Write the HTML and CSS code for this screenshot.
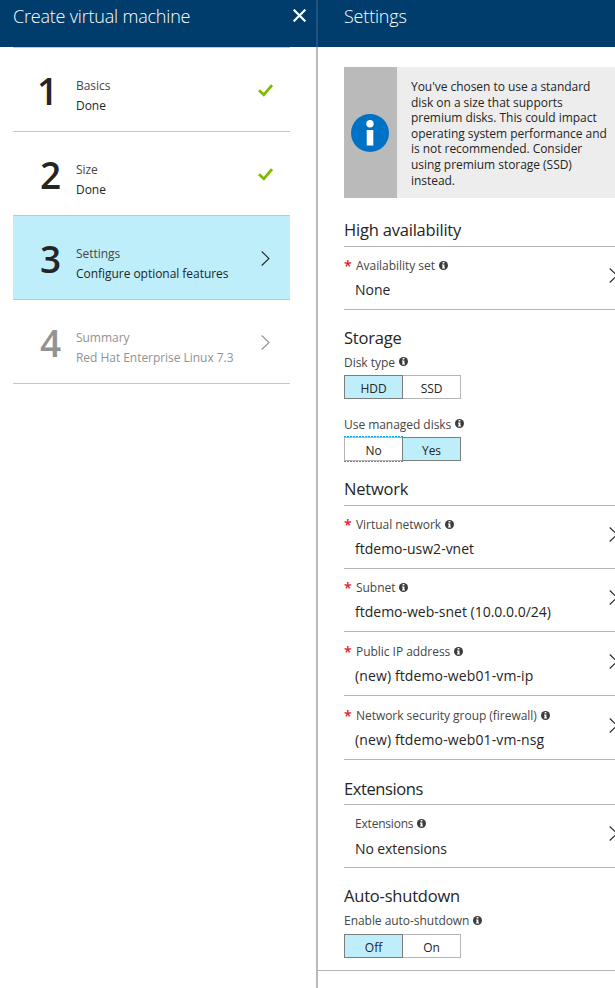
FILE: index.html
```
<!DOCTYPE html>
<html lang="en">
<head>
<meta charset="utf-8">
<title>Create virtual machine</title>
<link rel="stylesheet" href="styles.css">
</head>
<body>
<svg width="0" height="0" class="defs" aria-hidden="true">
  <symbol id="info" viewBox="0 0 9 9"><circle cx="4.5" cy="4.5" r="4.5" fill="#3c3c3c"/><path d="M3.6 1.1h1.8v1.5H3.6zM3 3.4h2.4v3H6v1H3v-1h.6v-2H3z" fill="#fff"/></symbol>
  <symbol id="chevron" viewBox="0 0 9 15"><path d="M.7.5 8 7.5.7 14.5" fill="none" stroke="currentColor" stroke-width="1.05"/></symbol>
  <symbol id="check" viewBox="0 0 15 13"><path d="M1 6.3 5.8 10.8 14 1.2" fill="none" stroke="#7fba00" stroke-width="2.8"/></symbol>
</svg>
<main class="blades">
  <section class="blade wizard">
    <header class="head"><h1 class="t-create">Create virtual machine</h1>
      <svg class="close" viewBox="0 0 12 12"><path d="M.6.6 11.4 11.4M11.4.6.6 11.4" stroke="#fff" stroke-width="2"/></svg>
    </header>
    <ol class="steps">
      <li class="step"><span class="num one">1</span><div class="info"><p class="name">Basics</p><p class="desc">Done</p></div><svg class="check"><use href="#check"/></svg></li>
      <li class="step"><span class="num">2</span><div class="info"><p class="name">Size</p><p class="desc">Done</p></div><svg class="check"><use href="#check"/></svg></li>
      <li class="step active"><span class="num">3</span><div class="info"><p class="name">Settings</p><p class="desc">Configure optional features</p></div><svg class="chev"><use href="#chevron"/></svg></li>
      <li class="step disabled"><span class="num">4</span><div class="info"><p class="name">Summary</p><p class="desc">Red Hat Enterprise Linux 7.3</p></div><svg class="chev"><use href="#chevron"/></svg></li>
    </ol>
  </section>
  <section class="blade settings">
    <header class="head"><h1>Settings</h1></header>
    <div class="content">
      <div class="notice">
        <div class="notice-icon"><svg viewBox="0 0 38 38"><circle cx="19" cy="19" r="19" fill="#0072c6"/><circle cx="19" cy="9.7" r="3.7" fill="#fff"/><path d="M15.7 16h6.6v15.5h-6.6z" fill="#fff"/></svg></div>
        <p>You've chosen to use a standard<br>disk on a size that supports<br>premium disks. This could impact<br>operating system performance and<br>is not recommended. Consider<br>using premium storage (SSD)<br>instead.</p>
      </div>
      <h2 class="h-avail">High availability</h2>
      <div class="field"><div><p class="label"><b>*</b><span>Availability set</span><svg><use href="#info"/></svg></p><p class="value">None</p></div><svg class="chev"><use href="#chevron"/></svg></div>
      <h2 class="h-storage">Storage</h2>
      <p class="label plain"><span>Disk type</span><svg><use href="#info"/></svg></p>
      <div class="toggle"><span class="on">HDD</span><span>SSD</span></div>
      <p class="label plain second"><span>Use managed disks</span><svg><use href="#info"/></svg></p>
      <div class="toggle"><span class="focus">No</span><span class="on">Yes</span></div>
      <h2 class="h-network">Network</h2>
      <div class="field"><div><p class="label"><b>*</b><span>Virtual network</span><svg><use href="#info"/></svg></p><p class="value">ftdemo-usw2-vnet</p></div><svg class="chev"><use href="#chevron"/></svg></div>
      <div class="field"><div><p class="label"><b>*</b><span>Subnet</span><svg><use href="#info"/></svg></p><p class="value">ftdemo-web-snet (10.0.0.0/24)</p></div><svg class="chev"><use href="#chevron"/></svg></div>
      <div class="field tall"><div><p class="label"><b>*</b><span>Public IP address</span><svg><use href="#info"/></svg></p><p class="value wide">(new) ftdemo-web01-vm-ip</p></div><svg class="chev"><use href="#chevron"/></svg></div>
      <div class="field tall"><div><p class="label"><b>*</b><span>Network security group (firewall)</span><svg><use href="#info"/></svg></p><p class="value wide">(new) ftdemo-web01-vm-nsg</p></div><svg class="chev"><use href="#chevron"/></svg></div>
      <h2 class="h-ext">Extensions</h2>
      <div class="field optional"><div><p class="label"><span>Extensions</span><svg><use href="#info"/></svg></p><p class="value">No extensions</p></div><svg class="chev"><use href="#chevron"/></svg></div>
      <h2 class="h-auto">Auto-shutdown</h2>
      <p class="label plain last"><span>Enable auto-shutdown</span><svg><use href="#info"/></svg></p>
      <div class="toggle"><span class="on">Off</span><span>On</span></div>
    </div>
    <footer></footer>
  </section>
</main>
</body>
</html>
```
FILE: styles.css
```
* { box-sizing: border-box; margin: 0; padding: 0; }
html, body { height: 100%; overflow: hidden; }
body { background: #fff; color: #252525; font: 12px/16px "Open Sans", "Noto Sans", sans-serif; letter-spacing: -0.04px; white-space: nowrap; }
svg { display: block; flex: none; }
.defs { position: absolute; }
.blades { display: flex; height: 988px; }
.wizard { width: 316px; }
.settings { flex: 1; min-width: 0; border-left: 2px solid #bababa; }
.head { display: flex; justify-content: space-between; height: 47px; padding: 4px 10px 0 13px; background: #003c6c; color: #fff; }
.settings .head { margin-left: -2px; padding-left: 26px; border-left: 2px solid #1f5480; }
h1 { font-size: 18px; line-height: 24px; font-weight: 300; letter-spacing: -0.2px; }
.close { width: 13px; height: 13px; margin-top: 5px; }

.steps { list-style: none; margin: 0 26px 0 13px; border-top: 1px solid #c6c6c6; }
.step { display: flex; height: 84px; padding: 0 20px 0 27px; border-bottom: 1px solid #c6c6c6; }
.step.active { background: #bdeefa; }
.num { width: 36px; padding-top: 19px; font-size: 37px; line-height: 48px; font-weight: 600; letter-spacing: 0; }
.num.one { margin-left: -3px; width: 39px; }
.info { flex: 1; padding-top: 28px; line-height: 20px; }
.name { color: #464646; }
.step .chev { margin-top: 35px; }
.check { width: 15px; height: 13px; margin: 36px -3px 0 0; }
.chev { width: 9px; height: 15px; }
.disabled, .disabled .name { color: #929292; }

.content { padding-left: 26px; height: 903px; }
.notice { display: flex; height: 131px; margin-top: 20px; background: #ededed; }
.notice-icon { display: flex; align-items: center; justify-content: center; width: 53px; padding-right: 1px; background: #bababa; }
.notice-icon svg { width: 38px; height: 38px; }
.notice p { padding: 12px 0 0 14px; line-height: 15.6px; }
h2 { font-size: 16.5px; line-height: 24px; font-weight: 400; letter-spacing: -0.2px; }
.h-avail { height: 49px; padding-top: 20px; border-bottom: 1px solid #b5b5b5; }
.h-storage { height: 43px; padding-top: 16px; }
.h-network { height: 45px; padding-top: 16px; border-bottom: 1px solid #b5b5b5; }
.h-ext { height: 45px; padding-top: 17px; border-bottom: 1px solid #b5b5b5; letter-spacing: -0.4px; }
.h-auto { height: 43px; padding-top: 16px; }
.field { display: flex; justify-content: space-between; height: 63px; padding-top: 10px; border-bottom: 1px solid #b5b5b5; }
.field.tall { height: 64px; padding-top: 11px; }
.field .chev { margin: 11px -3px 0 0; }
.label { display: flex; align-items: center; height: 16px; color: #464646; }
.label span { padding-top: 2px; }
.label b { width: 12px; padding-top: 1px; color: #e81123; font-size: 14px; font-weight: 600; }
.label svg { width: 9px; height: 9px; margin-left: 4px; }
.value { padding-left: 11px; margin-top: 7px; font-size: 14px; line-height: 20px; letter-spacing: 0; }
.value.wide { letter-spacing: 0.12px; }
.optional .label { padding-left: 11px; letter-spacing: -0.2px; }
.optional .value { margin-top: 8px; letter-spacing: -0.1px; }
.plain { height: 22px; padding-bottom: 5px; }
.second { height: 38px; padding-top: 16px; }
.last { height: 23px; }
.toggle { display: flex; width: 117px; height: 24px; }
.toggle span { position: relative; flex: 1; border: 1px solid #b5b5b5; text-align: center; line-height: 25px; }
.toggle span + span { margin-left: -1px; }
.toggle .on { z-index: 1; background: #bdeefa; border-color: #7d7d7d; }
.toggle .focus::before, .toggle .focus::after { content: ""; position: absolute; left: -1px; right: -2px; height: 1px; background: repeating-linear-gradient(90deg, #00abec 0 2px, #fff 2px 3px); }
.toggle .focus::before { top: -2px; }
.toggle .focus::after { bottom: -2px; }
footer { border-top: 1px solid #b5b5b5; height: 18px; }
```
